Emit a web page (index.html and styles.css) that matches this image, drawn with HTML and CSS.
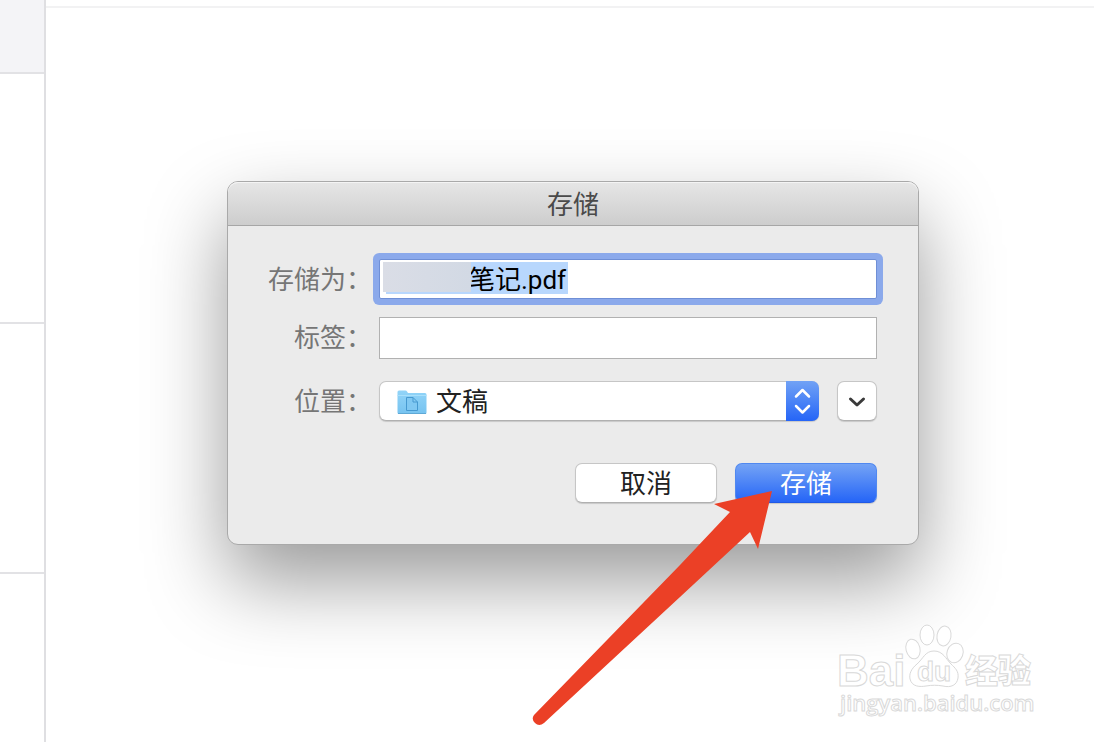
FILE: index.html
```
<!DOCTYPE html>
<html lang="zh-CN">
<head>
  <meta charset="UTF-8" />
  <meta name="viewport" content="width=device-width, initial-scale=1.0" />
  <title>存储</title>
  <link rel="stylesheet" href="styles.css">
</head>
<body>
  <aside class="sidebar">
    <div class="sidebar-cell active"></div>
    <div class="sidebar-cell"></div>
    <div class="sidebar-cell"></div>
    <div class="sidebar-cell"></div>
  </aside>

  <main class="content">
    <form class="dialog">
      <h1 class="dialog-title">存储</h1>

      <div class="dialog-body">
        <label for="filename">存储为：</label>
        <div class="field">
          <input type="text" id="filename" class="text-input filename" value="笔记.pdf">
          <span class="mask"></span>
        </div>

        <label for="tags">标签：</label>
        <input type="text" id="tags" class="text-input tags">

        <label for="location">位置：</label>
        <div class="location-row">
          <div class="location">
            <select id="location">
              <option>文稿</option>
            </select>
            <svg class="folder" viewBox="0 0 30 25" width="30" height="25">
              <defs>
                <linearGradient id="folder-fill" x1="0" y1="0" x2="0" y2="1">
                  <stop offset="0" stop-color="#92d4f8" />
                  <stop offset="1" stop-color="#76c3f0" />
                </linearGradient>
              </defs>
              <path d="M0.5 22.5V2Q0.5 0.5 2 0.5H8.5Q9.5 0.5 10 1.5L11 3H28Q29.5 3 29.5 4.5V22.5Q29.5 24 28 24H2Q0.5 24 0.5 22.5Z" fill="url(#folder-fill)" />
              <path d="M0.5 5.5H29.5" stroke="#a9e0fb" />
              <path d="M1 23.5H29" stroke="#5fa9d6" />
              <path d="M9.5 7.5H16L20.5 12V20.5H9.5ZM16 7.5V12H20.5" fill="#80c8f2" stroke="#4699d0" />
            </svg>
            <span class="stepper">
              <svg viewBox="0 0 33 40" width="33" height="40">
                <path d="M10 15.5L16.5 9L23 15.5M10 25L16.5 31.5L23 25" fill="none" stroke="#fff" stroke-width="2.5" stroke-linecap="round" stroke-linejoin="round" />
              </svg>
            </span>
          </div>
          <button type="button" class="btn btn-expand" aria-label="展开">
            <svg viewBox="0 0 18 12" width="18" height="12">
              <path d="M2.5 3L9 9L15.5 3" fill="none" stroke="#3a3a3a" stroke-width="3" stroke-linecap="round" stroke-linejoin="round" />
            </svg>
          </button>
        </div>

        <div class="actions">
          <button type="button" class="btn">取消</button>
          <button type="submit" class="btn btn-primary">存储</button>
        </div>
      </div>
    </form>
  </main>

  <svg class="watermark" viewBox="0 0 210 110" width="210" height="110">
    <g class="watermark-logo">
      <text x="7" y="66" class="latin">Bai</text>
      <ellipse cx="83" cy="29" rx="7" ry="10" transform="rotate(-14 83 29)" />
      <ellipse cx="97" cy="15" rx="7" ry="10" />
      <ellipse cx="114" cy="16" rx="7" ry="10" transform="rotate(10 114 16)" />
      <ellipse cx="125" cy="33" rx="8" ry="10" transform="rotate(20 125 33)" />
      <path d="M104 31C95 31 93 39 87 44C81 49 79 54 80 59C82 67 90 67 96 66C102 65 107 65 113 66C121 68 127 65 128 58C129 51 125 48 121 44C116 39 113 31 104 31Z" />
      <text x="87" y="61" class="du">du</text>
      <text x="135" y="63" class="cjk">经验</text>
    </g>
    <text x="10" y="91" class="watermark-url">jingyan.baidu.com</text>
  </svg>

  <svg class="arrow" viewBox="0 0 240 236" width="240" height="236">
    <path d="M240 0L182 13L198 21L148 74L2 224Q-1 228 3 232Q7 236 12 232L148 106L218 41L226 58Z" fill="#eb4026" />
  </svg>
</body>
</html>
```
FILE: styles.css
```
* {
  box-sizing: border-box;
}

body {
  margin: 0;
  display: flex;
  min-height: 100vh;
  background: #fff;
  position: relative;
  overflow: hidden;
  font-family: Roboto, 'Noto Sans CJK SC', sans-serif;
  font-size: 26px;
}

/* Sidebar */
.sidebar {
  width: 46px;
  height: 100vh;
  overflow: hidden;
  border-right: 2px solid #dfdfe2;
}

.sidebar-cell {
  height: 250px;
  border-bottom: 2px solid #e2e2e5;
}

.sidebar-cell.active {
  height: 74px;
  background: #f4f4f7;
}

.content {
  flex: 1;
  display: flex;
  align-items: flex-start;
  justify-content: center;
  padding: 181px 0 0 6px;
  background: linear-gradient(#f2f2f3, #f2f2f3) 0 6px / 100% 2px no-repeat;
}

/* Save dialog */
.dialog {
  width: 692px;
  border: 1px solid #a9a9a9;
  border-radius: 11px;
  background: #ebebeb;
  box-shadow: 0 36px 80px rgba(0, 0, 0, 0.4);
}

.dialog-title {
  margin: 0;
  height: 44px;
  padding-top: 2px;
  line-height: 42px;
  border-bottom: 1px solid #a6a6a6;
  border-radius: 10px 10px 0 0;
  background: linear-gradient(#e6e6e6, #cdcdcd);
  box-shadow: inset 0 1px 0 #f4f4f4;
  color: #4a4a4a;
  font-size: 26px;
  font-weight: 400;
  text-align: center;
}

.dialog-body {
  display: grid;
  grid-template-columns: 104px 1fr;
  column-gap: 7px;
  row-gap: 16px;
  align-items: start;
  padding: 33px 41px 41px 40px;
}

.dialog-body label {
  color: #767676;
  line-height: 42px;
  text-align: right;
  white-space: nowrap;
}

.field,
.location {
  position: relative;
}

.text-input {
  display: block;
  width: 100%;
  height: 42px;
  border: 1px solid #b1b1b1;
  border-radius: 0;
  background: #fff;
  color: #000;
  font: inherit;
  outline: none;
}

.tags {
  margin-bottom: 6px;
}

.filename {
  height: 40px;
  padding: 0 8px 4px 89px;
  border-color: #6f8fd6;
  border-radius: 2px;
  background: linear-gradient(#b8d7fd, #b8d7fd) 6px 2px / 182px 32px no-repeat #fff;
  box-shadow: 0 0 0 6px #8ba9eb;
}

.mask {
  position: absolute;
  top: 3px;
  left: 4px;
  width: 88px;
  height: 30px;
  background: linear-gradient(90deg, #dadde6, #d2d9e4);
}

.location-row {
  display: flex;
  gap: 18px;
}

.location {
  flex: 1;
}

.location select {
  display: block;
  width: 100%;
  height: 40px;
  padding: 2px 40px 0 56px;
  border: 1px solid #c6c6c6;
  border-bottom-color: #b0b0b0;
  border-radius: 7px;
  background: #fff;
  box-shadow: 0 1px 1px rgba(0, 0, 0, 0.15);
  color: #222;
  font: inherit;
  appearance: none;
  outline: none;
}

.folder {
  position: absolute;
  top: 9px;
  left: 18px;
  pointer-events: none;
}

.stepper {
  position: absolute;
  top: 0;
  right: 0;
  width: 33px;
  height: 40px;
  border-radius: 0 7px 7px 0;
  background: linear-gradient(#71a2f5, #2565f7);
  pointer-events: none;
}

.stepper svg {
  display: block;
}

.btn {
  display: flex;
  align-items: center;
  justify-content: center;
  width: 142px;
  height: 40px;
  padding: 2px 0 0;
  border: 1px solid #c6c6c6;
  border-bottom-color: #b0b0b0;
  border-radius: 7px;
  background: #fff;
  box-shadow: 0 1px 1px rgba(0, 0, 0, 0.15);
  color: #222;
  font: inherit;
  line-height: 36px;
}

.btn-expand {
  width: 40px;
}

.btn-primary {
  border-color: #5088f0;
  border-bottom-color: #2059e5;
  background: linear-gradient(#74a3f5, #2565f7);
  color: #fff;
}

.actions {
  grid-column: 1 / -1;
  display: flex;
  justify-content: flex-end;
  gap: 18px;
  margin-top: 24px;
}

/* Overlays */
.watermark {
  position: absolute;
  right: 54px;
  bottom: 12px;
  fill: #fff;
  stroke: #d9d9d9;
  stroke-width: 1px;
}

.watermark .latin {
  font: bold 44px 'Liberation Sans', sans-serif;
}

.watermark .du {
  font: bold 28px 'Liberation Sans', sans-serif;
}

.watermark .cjk {
  font: 900 33px 'Noto Sans CJK SC', sans-serif;
}

.watermark-url {
  font: 600 22px 'Open Sans', sans-serif;
}

.arrow {
  position: absolute;
  right: 322px;
  bottom: 15px;
  pointer-events: none;
}
```
